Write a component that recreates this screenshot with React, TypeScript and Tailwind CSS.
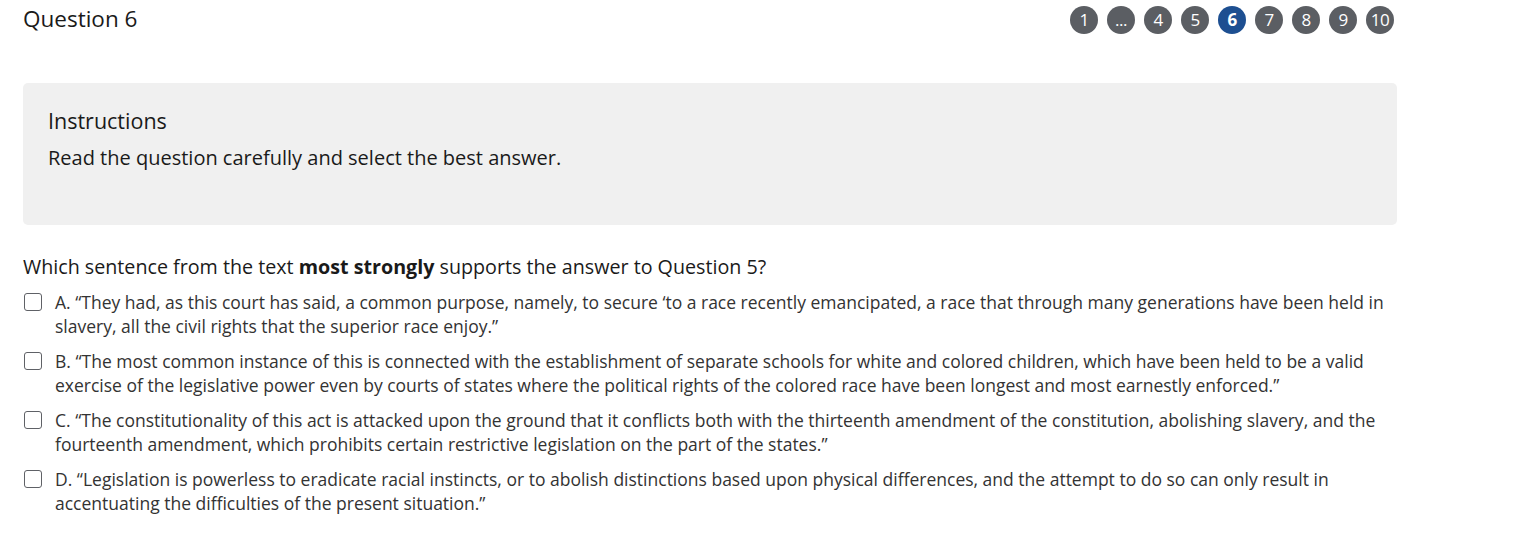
import React from "react";

const pages = ["1", "...", "4", "5", "6", "7", "8", "9", "10"];

const options = [
  "A. “They had, as this court has said, a common purpose, namely, to secure ‘to a race recently emancipated, a race that through many generations have been held in slavery, all the civil rights that the superior race enjoy.”",
  "B. “The most common instance of this is connected with the establishment of separate schools for white and colored children, which have been held to be a valid exercise of the legislative power even by courts of states where the political rights of the colored race have been longest and most earnestly enforced.”",
  "C. “The constitutionality of this act is attacked upon the ground that it conflicts both with the thirteenth amendment of the constitution, abolishing slavery, and the fourteenth amendment, which prohibits certain restrictive legislation on the part of the states.”",
  "D. “Legislation is powerless to eradicate racial instincts, or to abolish distinctions based upon physical differences, and the attempt to do so can only result in accentuating the difficulties of the present situation.”",
];

export default function App() {
  return (
    <div className="min-h-[560px] bg-white text-[#1a1a1a] font-['Open_Sans',sans-serif]">
      <div className="w-[1397px] pl-[23px]">
        <div className="flex items-start justify-between pt-[6px]">
          <h2 className="text-[22.5px] leading-[26px]">Question 6</h2>
          <nav className="flex gap-[9px] pr-[3px]">
            {pages.map((p) => (
              <span
                key={p}
                className={
                  "flex h-[28px] w-[28px] items-center justify-center rounded-full text-[17px] tracking-[-0.5px] text-white " +
                  (p === "6" ? "bg-[#1d4f91] font-bold" : "bg-[#5b5e63]")
                }
              >
                {p}
              </span>
            ))}
          </nav>
        </div>

        <div className="mt-[49px] h-[142px] rounded-[5px] bg-[#f0f0f0] px-[25px] pt-[26px]">
          <h3 className="text-[21.5px] leading-[24px]">Instructions</h3>
          <p className="mt-[13px] text-[20px] leading-[24px]">
            Read the question carefully and select the best answer.
          </p>
        </div>

        <p className="mt-[30px] text-[19.7px] leading-[24px]">
          Which sentence from the text <b>most strongly</b> supports the answer
          to Question 5?
        </p>

        <div className="mt-[11px] flex flex-col gap-[11px]">
          {options.map((o) => (
            <label key={o} className="flex items-start gap-[13px]">
              <span className="mt-[3px] ml-px h-[18px] w-[18px] shrink-0 rounded-[3px] border border-[#5f6166] bg-white" />
              <span className="text-[17.5px] leading-[24px] text-[#333]">{o}</span>
            </label>
          ))}
        </div>
      </div>
    </div>
  );
}
